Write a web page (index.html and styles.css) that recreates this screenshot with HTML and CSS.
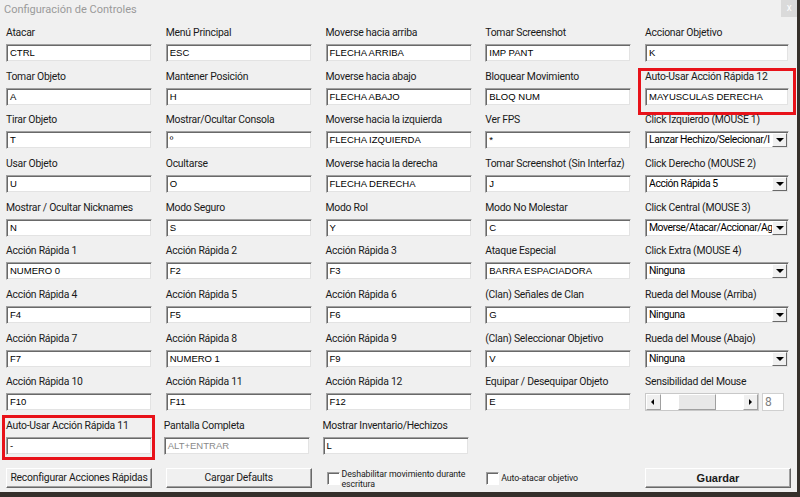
FILE: index.html
```html
<!DOCTYPE html>
<html lang="es">
<head>
    <meta charset="UTF-8">
    <title>Configuración de Controles</title>
    <link rel="stylesheet" href="styles.css">
</head>
<body>
    <div class="window">
        <div class="titlebar">
            <span class="title">Configuración de Controles</span>
            <span class="close">x</span>
        </div>
        <div class="grid">
            <!-- fila 1 -->
            <div class="field"><div class="lbl">Atacar</div><div class="box">CTRL</div></div>
            <div class="field"><div class="lbl">Menú Principal</div><div class="box">ESC</div></div>
            <div class="field"><div class="lbl">Moverse hacia arriba</div><div class="box">FLECHA ARRIBA</div></div>
            <div class="field"><div class="lbl">Tomar Screenshot</div><div class="box">IMP PANT</div></div>
            <div class="field"><div class="lbl">Accionar Objetivo</div><div class="box">K</div></div>
            <!-- fila 2 -->
            <div class="field"><div class="lbl">Tomar Objeto</div><div class="box">A</div></div>
            <div class="field"><div class="lbl">Mantener Posición</div><div class="box">H</div></div>
            <div class="field"><div class="lbl">Moverse hacia abajo</div><div class="box">FLECHA ABAJO</div></div>
            <div class="field"><div class="lbl">Bloquear Movimiento</div><div class="box">BLOQ NUM</div></div>
            <div class="field mark-right"><div class="lbl">Auto-Usar Acción Rápida 12</div><div class="box">MAYUSCULAS DERECHA</div></div>
            <!-- fila 3 -->
            <div class="field"><div class="lbl">Tirar Objeto</div><div class="box">T</div></div>
            <div class="field"><div class="lbl">Mostrar/Ocultar Consola</div><div class="box">º</div></div>
            <div class="field"><div class="lbl">Moverse hacia la izquierda</div><div class="box">FLECHA IZQUIERDA</div></div>
            <div class="field"><div class="lbl">Ver FPS</div><div class="box">*</div></div>
            <div class="field"><div class="lbl">Click Izquierdo (MOUSE 1)</div><div class="box combo"><span class="combo-text">Lanzar Hechizo/Selecionar/I</span><span class="drop"></span></div></div>
            <!-- fila 4 -->
            <div class="field"><div class="lbl">Usar Objeto</div><div class="box">U</div></div>
            <div class="field"><div class="lbl">Ocultarse</div><div class="box">O</div></div>
            <div class="field"><div class="lbl">Moverse hacia la derecha</div><div class="box">FLECHA DERECHA</div></div>
            <div class="field"><div class="lbl">Tomar Screenshot (Sin Interfaz)</div><div class="box">J</div></div>
            <div class="field"><div class="lbl">Click Derecho (MOUSE 2)</div><div class="box combo"><span class="combo-text">Acción Rápida 5</span><span class="drop"></span></div></div>
            <!-- fila 5 -->
            <div class="field"><div class="lbl">Mostrar / Ocultar Nicknames</div><div class="box">N</div></div>
            <div class="field"><div class="lbl">Modo Seguro</div><div class="box">S</div></div>
            <div class="field"><div class="lbl">Modo Rol</div><div class="box">Y</div></div>
            <div class="field"><div class="lbl">Modo No Molestar</div><div class="box">C</div></div>
            <div class="field"><div class="lbl">Click Central (MOUSE 3)</div><div class="box combo"><span class="combo-text tight">Moverse/Atacar/Accionar/Ag</span><span class="drop"></span></div></div>
            <!-- fila 6 -->
            <div class="field"><div class="lbl">Acción Rápida 1</div><div class="box">NUMERO 0</div></div>
            <div class="field"><div class="lbl">Acción Rápida 2</div><div class="box">F2</div></div>
            <div class="field"><div class="lbl">Acción Rápida 3</div><div class="box">F3</div></div>
            <div class="field"><div class="lbl">Ataque Especial</div><div class="box">BARRA ESPACIADORA</div></div>
            <div class="field"><div class="lbl">Click Extra (MOUSE 4)</div><div class="box combo"><span class="combo-text">Ninguna</span><span class="drop"></span></div></div>
            <!-- fila 7 -->
            <div class="field"><div class="lbl">Acción Rápida 4</div><div class="box">F4</div></div>
            <div class="field"><div class="lbl">Acción Rápida 5</div><div class="box">F5</div></div>
            <div class="field"><div class="lbl">Acción Rápida 6</div><div class="box">F6</div></div>
            <div class="field"><div class="lbl">(Clan) Señales de Clan</div><div class="box">G</div></div>
            <div class="field"><div class="lbl">Rueda del Mouse (Arriba)</div><div class="box combo"><span class="combo-text">Ninguna</span><span class="drop"></span></div></div>
            <!-- fila 8 -->
            <div class="field"><div class="lbl">Acción Rápida 7</div><div class="box">F7</div></div>
            <div class="field"><div class="lbl">Acción Rápida 8</div><div class="box">NUMERO 1</div></div>
            <div class="field"><div class="lbl">Acción Rápida 9</div><div class="box">F9</div></div>
            <div class="field"><div class="lbl">(Clan) Seleccionar Objetivo</div><div class="box">V</div></div>
            <div class="field"><div class="lbl">Rueda del Mouse (Abajo)</div><div class="box combo"><span class="combo-text">Ninguna</span><span class="drop"></span></div></div>
            <!-- fila 9 -->
            <div class="field"><div class="lbl">Acción Rápida 10</div><div class="box">F10</div></div>
            <div class="field"><div class="lbl">Acción Rápida 11</div><div class="box">F11</div></div>
            <div class="field"><div class="lbl">Acción Rápida 12</div><div class="box">F12</div></div>
            <div class="field"><div class="lbl">Equipar / Desequipar Objeto</div><div class="box">E</div></div>
            <div class="field">
                <div class="lbl">Sensibilidad del Mouse</div>
                <div class="slider-row">
                    <div class="scrollbar">
                        <span class="arrow left"></span>
                        <span class="track"></span>
                        <span class="thumb"></span>
                        <span class="track wide"></span>
                        <span class="arrow right"></span>
                    </div>
                    <div class="value">8</div>
                </div>
            </div>
            <!-- fila 10 -->
            <div class="field mark-left"><div class="lbl">Auto-Usar Acción Rápida 11</div><div class="box">-</div></div>
            <div class="field shift2"><div class="lbl">Pantalla Completa</div><div class="box disabled">ALT+ENTRAR</div></div>
            <div class="field shift3"><div class="lbl">Mostrar Inventario/Hechizos</div><div class="box">L</div></div>
            <div></div>
            <div></div>
            <!-- botones -->
            <div class="bottom"><div class="button">Reconfigurar Acciones Rápidas</div></div>
            <div class="bottom"><div class="button">Cargar Defaults</div></div>
            <div class="bottom check"><span class="checkbox"></span><span class="check-lbl">Deshabilitar movimiento durante escritura</span></div>
            <div class="bottom check single"><span class="checkbox"></span><span class="check-lbl">Auto-atacar objetivo</span></div>
            <div class="bottom"><div class="button bold">Guardar</div></div>
        </div>
    </div>
</body>
</html>
```
FILE: styles.css
```css
body {
    margin: 0;
    padding: 0;
    background-color: #35302b;
    font-family: Roboto, "Liberation Sans", sans-serif;
    font-size: 10.4px;
    letter-spacing: -0.25px;
    color: #000;
}
.window {
    width: 797px;
    height: 492px;
    background-color: #f0f0f0;
    overflow: hidden;
}
.titlebar {
    height: 20px;
    display: flex;
    justify-content: space-between;
    align-items: flex-start;
}
.title {
    color: #9a9a9a;
    font-size: 11px;
    letter-spacing: 0;
    padding: 3px 0 0 4px;
}
.close {
    width: 16px;
    height: 17px;
    background-color: #dadada;
    color: #fff;
    font-size: 10px;
    text-align: center;
    line-height: 16px;
}
.grid {
    display: grid;
    grid-template-columns: 159.75px 159.75px 159.75px 159.75px 1fr;
    grid-auto-rows: 43.67px;
    padding: 2px 0 0 6px;
}
.field {
    position: relative;
}
.lbl {
    height: 22px;
    line-height: 22px;
    white-space: nowrap;
    color: #1a1a1a;
}
.box {
    width: 146px;
    height: 18px;
    box-sizing: border-box;
    background-color: #fff;
    border: 1px solid;
    border-color: #a0a0a0 #f0f0f0 #f0f0f0 #a0a0a0;
    box-shadow: inset 1px 1px #696969, inset -1px -1px #e3e3e3;
    padding: 0 0 0 3px;
    font-family: "Liberation Sans", sans-serif;
    font-size: 9.5px;
    letter-spacing: 0;
    line-height: 16px;
    white-space: nowrap;
    overflow: hidden;
}
.field:nth-child(5n) .box {
    width: 144px;
}
.disabled {
    color: #8a8a8a;
}
.combo {
    display: flex;
    font-family: Roboto, "Liberation Sans", sans-serif;
    font-size: 10.4px;
    letter-spacing: -0.4px;
    padding-right: 1px;
}
.combo-text {
    flex: 1;
    overflow: hidden;
}
.combo-text.tight {
    letter-spacing: -0.5px;
}
.drop {
    width: 15px;
    height: 14px;
    flex: none;
    margin-top: 1px;
    background-color: #f0f0f0;
    border: 1px solid;
    border-color: #fff #696969 #696969 #fff;
    box-sizing: border-box;
    position: relative;
}
.drop::after {
    content: "";
    position: absolute;
    left: 3px;
    top: 4px;
    border-left: 4px solid transparent;
    border-right: 4px solid transparent;
    border-top: 4px solid #000;
}
.slider-row {
    display: flex;
    gap: 3px;
}
.scrollbar {
    width: 114px;
    height: 18px;
    display: flex;
    background-color: #fff;
    border: 1px solid #c8c8c8;
    box-sizing: border-box;
}
.arrow {
    width: 13px;
    background-color: #f0f0f0;
    border: 1px solid;
    border-color: #fff #a0a0a0 #a0a0a0 #fff;
    position: relative;
}
.arrow::after {
    content: "";
    position: absolute;
    top: 4px;
    border-top: 3px solid transparent;
    border-bottom: 3px solid transparent;
}
.arrow.left::after {
    left: 4px;
    border-right: 3px solid #000;
}
.arrow.right::after {
    left: 5px;
    border-left: 3px solid #000;
}
.track {
    width: 17px;
}
.track.wide {
    flex: 1;
}
.thumb {
    width: 36px;
    background-color: #e8e8e8;
    border: 1px solid;
    border-color: #fff #a0a0a0 #a0a0a0 #fff;
}
.value {
    width: 22px;
    height: 18px;
    box-sizing: border-box;
    background-color: #fff;
    border: 1px solid #d0d0d0;
    padding-left: 2px;
    color: #808080;
    font-size: 12px;
    line-height: 16px;
}
.mark-right::after,
.mark-left::after {
    content: "";
    position: absolute;
    box-sizing: border-box;
    border: 3px solid #e8121a;
}
.mark-right::after {
    left: -7px;
    top: 2px;
    width: 158px;
    height: 47px;
}
.mark-left::after {
    left: -4px;
    top: 0;
    width: 153px;
    height: 45px;
}
.shift2 {
    margin-left: -2px;
}
.shift3 {
    margin-left: -3px;
}
.bottom {
    padding-top: 9px;
}
.button {
    width: 146px;
    height: 20px;
    box-sizing: border-box;
    background-color: #f0f0f0;
    border: 1px solid;
    border-color: #fff #696969 #696969 #fff;
    box-shadow: inset -1px -1px #a0a0a0;
    text-align: center;
    line-height: 18px;
    color: #1a1a1a;
}
.bold {
    font-weight: bold;
    font-family: "Liberation Sans", sans-serif;
    font-size: 11px;
    letter-spacing: 0;
}
.check {
    display: flex;
    align-items: flex-start;
    gap: 2px;
    padding-top: 13px;
    margin-left: 1px;
}
.checkbox {
    width: 13px;
    height: 13px;
    flex: none;
    box-sizing: border-box;
    background-color: #fff;
    border: 1px solid;
    border-color: #a0a0a0 #fff #fff #a0a0a0;
    box-shadow: inset 1px 1px #696969;
}
.check-lbl {
    font-size: 8.8px;
    letter-spacing: -0.1px;
    line-height: 10px;
    width: 130px;
    margin-top: -3px;
    color: #1a1a1a;
}
.single .check-lbl {
    margin-top: 1px;
}
```
